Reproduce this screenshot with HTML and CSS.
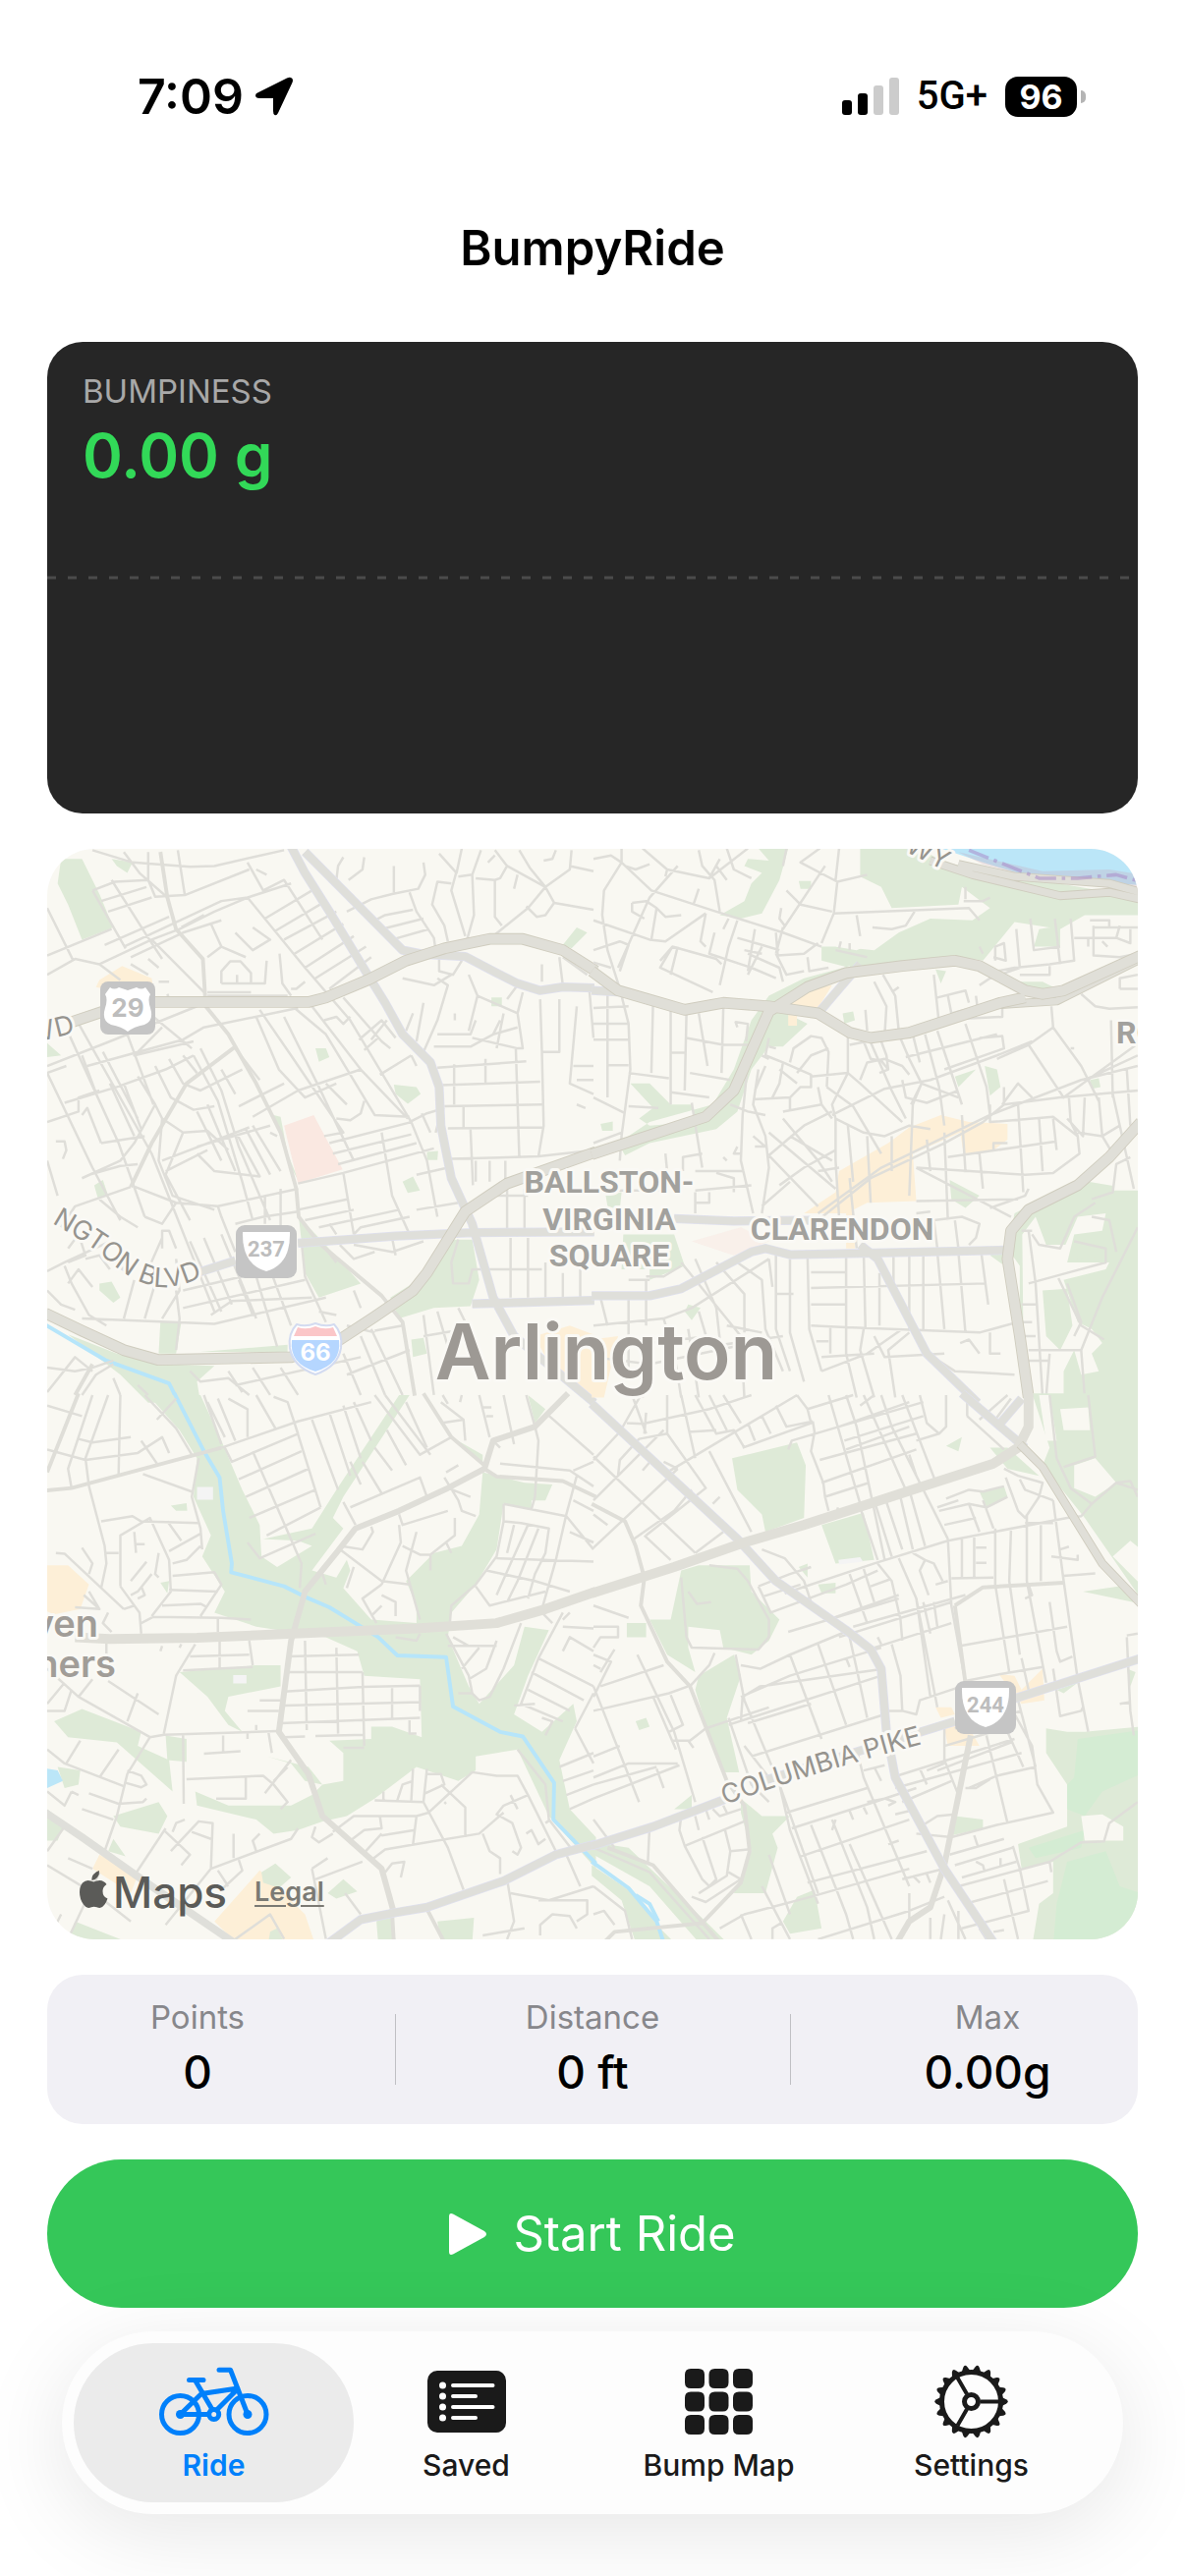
FILE: index.html
```html
<!DOCTYPE html>
<html lang="en">
<head>
<meta charset="utf-8">
<meta name="viewport" content="width=device-width, initial-scale=1">
<title>BumpyRide</title>
<link rel="stylesheet" href="styles.css">
</head>
<body>
<div class="app">
  <div class="status">
    <div class="status-left">
      <span class="clock">7:09</span>
      <svg class="locate" viewBox="0 0 38 40" aria-hidden="true"><path d="M36 1q3 1 1.500 5L23 37q-1.500 3-3.500 2-1.500-1-1.500-4V22H4q-4 0-4-3 0-2 3-3L32 1.500Q34.500.400 36 1z"/></svg>
    </div>
    <div class="status-right">
      <svg class="signal" viewBox="0 0 58 38" aria-hidden="true"><rect y="23" width="10" height="15" rx="3"/><rect x="16" y="16" width="10" height="22" rx="3"/><rect class="off" x="32" y="8" width="10" height="30" rx="3"/><rect class="off" x="48" width="10" height="38" rx="3"/></svg>
      <span class="network">5G+</span>
      <span class="battery">96</span>
    </div>
  </div>

  <header class="title-bar"><h1>BumpyRide</h1></header>

  <main class="content">
    <section class="graph">
      <h2 class="graph-label">BUMPINESS</h2>
      <p class="graph-value">0.00 g</p>
      <svg class="graph-line" aria-hidden="true"><line x1="0" y1="2" x2="100%" y2="2"/></svg>
    </section>

    <section class="map" aria-label="Map of Arlington">
      <svg class="map-art" viewBox="0 0 1110 1110">
        <!-- north-west -->
        <g transform="translate(0 -4) scale(.3546 .3571)">
          <path class="park" d="M40 40H100L150 140 190 235 100 270 60 170 30 110zM185 40 245 50 230 80 200 60zM1480 285 1520 235 1550 250 1505 295zM1275 435H1305V460H1275zM770 580H800L810 605 780 618zM995 683 1060 690 1072 710 1035 738 1000 710zM0 565 40 600 0 605zM650 770 670 775 690 880 725 965 690 900zM1090 875 1122 872 1120 898H1090zM1020 960 1050 945 1070 985 1035 992zM135 970 160 955 175 1000 145 1005zM150 1250 185 1245 210 1290 190 1305 150 1270zM722 1060 790 1130 900 1250 780 1290 740 1220zM985 1290 1080 1230 1150 1125H1220L1240 1240 1215 1315 1110 1320 1010 1350zM325 1360H385L370 1450H320zM60 1395 200 1450 330 1480 480 1485 430 1530 440 1590H290L210 1510zM1045 1410 1080 1405 1090 1450 1050 1460zM440 1445 690 1425V1445z"/>
          <path class="hospital" d="M680 800 765 770 848 925 720 965z"/>
          <path class="shops" d="M150 385 215 345 300 380 310 440 140 405zM1400 1400 1500 1370 1580 1400V1568H1530L1430 1460z"/>
          <path class="river" d="M-10 1365 170 1470 350 1535 370 1575"/>
          <path class="street" d="M130 15 245 50 410 62 480 60 590 35 680 15M290 20V100L310 148 395 143 580 70M375 15 395 143M220 20 265 80 345 150M130 130 195 105 290 100M130 130 225 295M185 100 290 265 330 325M155 160 285 120M175 190 300 150M0 180 75 330M0 315 185 240M0 370 80 325 150 340 300 270 380 240 480 190 575 150 700 110M165 285 350 205M220 290 500 160 575 150M240 320 390 250 500 215M150 340 210 385M300 270 450 420M385 235 450 200M470 225 500 290 460 320M500 290 570 320M575 150 740 350 870 500 1045 790M575 50 620 130 680 100 790 270M625 210 760 130M655 245 800 160M680 270 830 190M710 310 850 225M740 350 880 260M770 380 915 290M810 410 930 320M600 70 630 85M500 395V360L525 332H555L585 365V395H500M545 370V395M630 330 625 395H585M460 420H585M460 430H690M667 310 675 395 700 430M590 235 640 270 590 300 540 250M700 410H715L740 390M240 340 290 370M290 325 320 350M320 390H350M320 440H350L345 425M830 100 835 60 850 35M865 100 905 70 910 35M995 60V135M1080 50 1085 85 1065 125 990 140 930 155 860 190M940 215 970 200 1050 185M960 240 1080 210M990 270 1095 240M1040 135 1060 190 1110 265 1115 300M1125 25 1175 80 1190 10M1175 75 1160 130 1200 260M1160 110 1120 105 1105 170 1140 230 1150 275M1245 15 1220 85 1180 90M1220 85 1225 200 1205 270M1285 15 1320 60 1430 120 1380 180 1280 260M1230 95 1285 100V205L1305 230M1320 60 1300 95 1285 100M1355 15 1385 65 1430 120 1500 70 1505 15M1430 120 1455 165 1568 185M1375 175 1405 205 1430 200 1455 165M1265 50 1285 30M1340 125 1350 85M1500 60 1568 75M1425 45 1450 40 1460 15M0 630 180 560 430 460M0 650 55 630M85 500 300 880 420 1180 480 1330M50 735 200 690 340 640 420 600M65 545 205 850 280 1060M115 630 390 555 450 520 720 465M145 720 100 600M100 770 115 750 155 850M0 790 90 760 90 720 150 700M0 650 130 920 210 1070M180 680 250 830M220 680 270 810M260 660 310 740 250 850 210 900 100 950M310 630 355 720 420 755 480 745M350 610 390 680 440 700 560 640M390 600 430 650M160 590 260 780M230 540 305 740M305 490 415 580M330 520 250 600 420 560M420 600 490 730 560 960 590 1070M440 580 500 700 550 860 640 1070M540 580 610 670M500 640 540 710M550 745 680 680M590 775 720 700 900 640M600 490 665 640 740 720 830 680M610 470 700 600 850 820 795 830M680 490 780 690 880 900M710 465 800 540 940 770 1040 775M760 460 900 640 1035 780M800 680 860 740M830 780 870 785 900 765 910 730M795 500 830 490 850 510 870 490M850 435 960 560 985 580M895 555 960 500 1000 550M910 585 950 550M930 555 975 500M955 655 1045 600M1045 600 1060 630M1060 560 1080 450M1030 530 1050 480M155 850 280 830M45 895 55 870 50 845 25 845M310 740 330 780 390 820 460 815 520 870M330 900 580 805M390 820 340 940 410 1070M430 760 500 900M460 740 540 930M330 780 320 900 360 1000 480 1040M430 860 640 800M570 810 640 940M590 800 670 930M545 825 610 945 480 930 430 880M640 820 660 830M240 975 80 1030 40 1090M120 940 210 915 260 910M240 970 370 1020 490 1030 720 980M340 930 460 870M0 900 30 1000M150 1010 210 1060 260 1090M370 1020 330 1080 280 1060M490 1030 500 1060 540 1160M540 1080 620 1060 720 1045M625 1000V1080M670 980V1090M720 1040 860 1010M740 1070 880 1040M810 850 1045 790M820 880 1045 825M835 910 1060 850M720 965 850 935 1110 865M850 935 880 1110M960 820 990 1000 1040 1110M1045 790 1090 900 1120 1060M1075 765 1100 820M1040 790 1090 765 1140 750M780 1090 1010 1040M810 1080 830 1110M880 1110 900 1090 1040 1060M1060 1040 1180 1020M1060 940 1150 920M1115 820 1130 760M1120 540H1215L1230 500M1110 575H1215L1280 540 1350 520M1120 635 1375 617M1130 685 1415 675M1140 745 1420 740M1150 808 1422 805M1160 895 1410 888 1568 870M1168 625V740M1195 745V810M1215 810 1222 970M1258 610V680M1345 580 1355 890M1415 440 1420 590 1425 800 1410 888M1470 440V590H1420M1520 460 1500 680 1568 710M1568 550 1555 400M1235 430 1350 480 1365 580 1350 580 1220 550M1210 370 1235 430 1210 530M1125 300V360L1165 370 1190 330M1120 380 1150 400 1120 500 1080 590M1020 380 1110 400 1160 370M1365 420 1350 480M1350 400 1320 440M1420 390V340M1470 320 1480 400M1480 320 1550 370M1170 480V500M1290 580 1310 480M1280 540 1300 500M1510 630H1568M1520 670H1568M1520 740 1545 750M1230 900V960M1270 900V960M1315 900V970M1280 1000H1380M1320 980V1100M1370 980V1100M1180 1125 1160 1190 1165 1250H1210L1220 1210H1420M1330 1120V1290M1380 1120V1290M1430 1190V1290M1480 1220V1290M1530 1200V1290M60 1190 110 1170 90 1110 60 1150M0 1215 50 1190 180 1130M110 1180 150 1170 180 1210M330 1150V1100L350 1100 370 1150M290 1210 330 1120M50 1200 70 1250 120 1340 170 1370M60 1250 90 1210 130 1260M0 1270 40 1310 80 1325M250 1240 220 1350M310 1250 280 1350M370 1180 380 1270 330 1350M410 1130 500 1330M450 1120 530 1310M500 1110 600 1350M550 1240 590 1340M600 1230 660 1430M640 1210 700 1370M390 1270 560 1230M390 1320 740 1240M470 1340 530 1300 760 1290M100 1350 360 1360 480 1365 800 1290M370 1270 380 1350 370 1440M730 1130 740 1230 800 1360M790 1140 830 1190M840 1140 880 1180 940 1160M880 1140 990 1160 1080 1130M990 1120 1000 1170M880 1270 900 1320M830 1340 780 1330M860 1370 940 1390M0 1490 80 1500 130 1490 190 1470M0 1560 80 1460 130 1500M100 1568 140 1510 190 1480M190 1520 210 1568M410 1500 440 1530 520 1520 580 1568M260 1540 290 1568M520 1500 560 1560M590 1490 640 1568M670 1490 720 1568M540 1540 900 1460M850 1450 900 1568M900 1400 970 1568M930 1380 1020 1568M940 1385 1020 1370M860 1510 1040 1440M1080 1340 1110 1568M1120 1330 1150 1430M1080 1400 1200 1380M1180 1320 1220 1400"/>
          <path class="road" d="M325 20 345 150 370 240 447 325 455 460 520 540 600 680 670 820 715 980 722 1060 780 1135 960 1285 1020 1360 1055 1570M540 575 400 680 300 850 240 975M130 1480 80 1568"/>
          <path class="avenue halo" d="M700 5 740 80 810 190 920 370 970 450 1020 540 1100 620 1125 690 1130 800 1160 950 1220 1080 1280 1290 1340 1400 1570 1590M740 20 830 110 960 240 1020 300 1080 312 1200 318 1290 365 1350 395 1415 415 1480 405 1570 408M720 1135 1000 1115 1220 1105 1570 1103M1220 1308 1570 1298M430 1220 540 1185M200 1190 235 1210"/>
          <path class="avenue" d="M700 5 740 80 810 190 920 370 970 450 1020 540 1100 620 1125 690 1130 800 1160 950 1220 1080 1280 1290 1340 1400 1570 1590M740 20 830 110 960 240 1020 300 1080 312 1200 318 1290 365 1350 395 1415 415 1480 405 1570 408M720 1135 1000 1115 1220 1105 1570 1103M1220 1308 1570 1298M430 1220 540 1185M200 1190 235 1210"/>
          <path class="highway casing" d="M70 505 160 475M300 448H750L800 435 920 385 1030 330 1140 295 1270 268H1365L1480 300 1575 360M-5 1335 100 1385 220 1440 320 1468 700 1460 840 1410 940 1345 1050 1270 1090 1220 1200 1045 1320 965 1575 875"/>
          <path class="highway" d="M70 505 160 475M300 448H750L800 435 920 385 1030 330 1140 295 1270 268H1365L1480 300 1575 360M-5 1335 100 1385 220 1440 320 1468 700 1460 840 1410 940 1345 1050 1270 1090 1220 1200 1045 1320 965 1575 875"/>
        </g>
        <!-- north-east -->
        <g transform="translate(556 -4) scale(.3571)">
          <path class="park" d="M470 10H555L530 100 480 195 420 210 360 200 430 160 450 110 480 80 430 60 440 40 500 45zM585 103H620V125H590zM760 10H930L1000 50 1150 80 1560 150V200H1400L1330 240 1200 220 1110 330 1050 320 900 330 730 350 650 330V290L700 290 800 300 870 250 960 210 1080 215 1130 180 1050 120 1040 170 850 180 820 120 760 90zM1270 240 1330 230V290H1255zM730 345 600 380 500 430 450 500 400 640 340 740 160 790 70 850 90 885 160 850 350 810 410 760 450 640 500 575 540 575 610 510 550 480 620 400 740 370zM105 680H160L220 740H280L290 790 160 800 130 780 170 750zM1180 390H1280L1340 420 1230 420zM1030 660 1090 640 1040 690zM1115 630 1150 640 1160 690 1130 715zM710 480 740 475 745 500 715 510zM975 355 1005 360 990 395zM20 795 55 788V815H25zM1415 670 1440 665 1445 690 1420 695zM1200 1050 1300 1000 1410 960 1560 985V1575H1240L1215 1400V1200L1180 1150zM1015 955 1100 1000 1060 1035 1020 1010zM85 1110H230L260 1200 160 1240V1210H80zM270 1310 305 1320 280 1355 260 1330zM1130 1170 1165 1150V1195zM35 1000 80 990 75 1040 40 1030z"/>
          <path class="land" d="M1222 1110 1260 1060 1290 1140 1345 1140 1380 1060 1460 1050 1450 1100 1370 1110 1350 1190 1470 1190 1460 1210 1340 1240 1380 1360 1420 1380 1450 1420 1420 1450 1440 1500 1390 1510 1370 1440 1340 1500V1575H1245L1225 1400zM1510 900 1560 900V985H1480zM860 180 1070 180 950 205 860 250 750 300 690 290z"/>
          <path class="park" d="M1280 1270 1350 1265 1365 1370 1330 1440 1290 1400zM1370 1130 1430 1120 1430 1175 1380 1180z"/>
          <path class="water" d="M990 10H1560V115L1260 95 1110 50z"/>
          <path class="haze" d="M1040 20 1280 75 1470 70 1560 85V135L1260 95 1110 55z"/>
          <path class="shops" d="M700 930 840 850 900 805 990 770 1070 790 1180 795V840L1140 870 1055 880 1045 820 910 880 920 1015 780 1020 740 1040 745 1150H720V1050H600L690 990zM550 465 610 410 680 400 640 465zM555 485H580V515H555zM-5 1410 70 1400 30 1575H-5z"/>
          <path class="hospital faint" d="M280 1130 420 1090 500 1130 400 1170z"/>
          <path class="street" d="M0 40 50 30 80 50 30 130 25 200 40 300 75 410M80 10V50L165 130 350 190 540 250 650 290M140 10 210 70 330 95 440 10M90 60 120 70 160 55M240 60 160 150 70 350M205 90 210 70M300 15 310 60 345 100 360 190M380 10 400 70 450 95M350 60 380 100M360 40 330 95M0 215 160 270 205 275 320 195M110 165 150 160 180 180 165 270M110 165 110 190 145 210M180 180 205 205 250 200M300 125 285 170M320 195 305 275 320 290M0 300 75 275 100 285 75 360M0 335 50 350M190 330 225 290 350 325 365 340M225 290 190 350 340 420M240 290 220 370M345 250 330 310 450 350 520 380M410 215 385 290 360 400M385 210 370 240M410 265 480 285 530 300M460 240 440 360M440 310 530 350 540 390M430 300 480 310M480 290 440 370M645 10 590 50 695 105 685 195 650 280M695 105 780 85M700 10 690 100M660 60 540 240M685 195 1070 180 1100 215M915 190 890 230 850 240 795 235M750 200 760 260M550 130 590 170 680 190M535 180 530 210 545 230M520 310 550 370 600 360M520 250 525 315 600 310 640 280M610 320 615 360 670 350M700 295 705 275M730 280V300M550 10 540 60M540 235 520 310M690 300 780 320M1055 160 1110 160 1130 150M1060 120 1060 155M1100 290 1110 310M1145 330V290L1170 280 1175 330 1140 320M1205 240 1215 350M1245 210 1255 300 1330 290M1315 210 1330 340M1360 210 1370 330 1300 340 1200 350 1150 360M1370 265H1490M1425 230V315L1500 320 1551 310M1425 235H1551M1415 215H1470V235M1500 230 1490 265 1530 280 1530 240M1450 275 1465 290M1410 265V290M1215 370H1300V345M1390 425 1430 460 1470 467 1551 463M1500 410 1500 380 1551 370M1500 410H1551M0 465 100 460M0 510H100M0 555H100M40 410V720M75 410 100 510 105 640 80 830 75 900M40 628H100M170 440 165 650M220 460V740M265 480 260 700M265 550 370 570 450 570M220 592H265M300 480 325 630M370 465 365 650M100 650 215 665M275 650 390 670M220 705 330 720M100 745 185 750M0 720 90 765M0 850 80 820M280 735 310 920M410 520 405 505 440 510 435 560M390 740 440 760 490 770M440 620 425 770 420 900 455 1050M470 640 455 740 490 830 500 920 480 1050M490 630 460 700M500 550 490 600 540 620 530 680 510 720M480 600 500 610M500 575 520 580M560 620 570 580 620 545 650 550 670 590 665 690M540 620 620 655 620 690 590 690 560 720 560 760M580 650 620 600 670 580M620 660 725 650 760 680 880 790M530 640 580 680M455 725 560 720M540 760 650 740 680 780M640 690 650 740M665 690 740 745 820 880M725 530 725 650 680 740 690 780M680 770 830 695 960 670 1150 600 1250 560M690 780 690 900 700 1060M725 800 740 960M690 780 770 820 830 830 900 800 960 810M780 540 850 700 890 780M730 570 780 560M770 560 790 610 820 615 840 640M760 670 780 620 830 610 880 630 900 655M815 650 840 640 835 600 820 560M870 540 900 610 935 680 1040 720M910 540 930 620M945 540 985 690 1000 800M980 530 1050 740M1060 510 1120 690 1130 770M890 605 1150 540M880 670 890 720 950 735 1040 700M935 680 910 740 900 1000M935 680 905 740M1000 640 1170 580 1165 545 1100 550M775 470 780 530M800 390 835 460 830 540M825 370 860 430 870 530M850 420 870 405M970 370 985 510M980 435 1060 415 1070 450M1010 430 1020 480 1060 470M1090 430 1095 470M1060 495 1165 490V450M1100 400 1130 380 1215 350M1305 460 1310 520 1240 570 1150 610M1310 520 1390 630 1440 730M1165 740 1210 680 1250 720M1240 570 1340 720 1560 560M1170 690 1170 740 1330 720 1551 700M1370 580 1360 580M1475 500 1480 720M1551 630 1390 670 1130 770 820 920 640 1050M1170 740 1110 790 1000 850 790 950 640 1070M1130 740V790L1310 775 1380 830M1210 740 1225 990M1270 780 1280 930M1310 780 1320 870M1355 720 1360 790 1380 830 1385 880 1310 935 1230 940 920 920M1400 720 1395 830 1350 780M1440 720 1450 830M1480 710 1500 800M1520 640 1530 800M1551 600 1400 670M1380 820 1450 830 1500 800M1450 830 1480 880M1010 890 1320 845M1000 820 1010 1070M1050 770 1060 930 1055 930M1100 880 1110 980M1140 870 1140 850H1180M920 920 1190 1060M950 840 960 930M850 830 850 930M780 830 790 1020M730 950 750 1150M640 930 700 920M500 820 690 980M540 780 640 900 680 960M560 830 680 900M500 885 600 800 680 760M500 885 640 1030M530 970 600 920 690 870M480 1030 560 960M455 830 490 860H460M0 985 200 985M290 930H430M255 930V890L310 880M205 880 210 930M350 935 400 950 400 990M290 985 450 970M290 990V1050M330 990V1020H290M370 890 380 900M410 860 400 880H420M920 1015 1210 1010M1130 1035 1230 1000 1240 980M920 1050 960 1045M970 1070 1050 1060 1100 1080 1090 1120 1070 1140M970 1070 980 1150M1030 1070 1040 1150M560 1180V1390L600 1530M520 1170V1380L560 1500M610 1170 615 1380 650 1500M720 1170V1380M770 1160 775 1380M815 1220V1370M855 1170V1250M900 1170V1380M940 1160V1380M980 1160 1000 1380M1040 1160 1060 1390M1105 1160 1125 1310M620 1218H720M620 1263 1120 1250M620 1310H720M520 1280H570M620 1370 720 1375 1100 1390 1210 1360M675 1375V1450M635 1415H670M650 1460 800 1450M720 1375V1450L750 1575M770 1380 760 1440 800 1575M880 1380 780 1450 650 1500M900 1390 840 1440 860 1575M800 1400 830 1460 1000 1450M1130 1390V1450H1160M1045 1420 1070 1410 1100 1450M960 1455 1030 1500 1200 1510M250 1190 420 1400 430 1575M290 1180 350 1320 370 1500M350 1190 430 1280V1390M410 1190 480 1240 490 1380 540 1500M500 1180 510 1260M250 1200 200 1230H150M100 1240H160M0 1370 200 1350 280 1320 500 1180M100 1290V1500M150 1240V1370M20 1290 40 1370M70 1430 330 1400M300 1330 330 1430 540 1400M380 1370 480 1390M0 1460 160 1480 400 1430M200 1350 230 1450 250 1575M270 1380 300 1575M140 1480V1575M1220 1360H1250M1220 1310H1260M1210 1400H1260M1240 1440 1390 1440M1250 1110 1270 1140 1330 1150 1370 1060 1430 1020M1240 1250 1350 1220 1460 1190 1460 1150 1370 1130M1325 1235 1390 1370 1455 1410M1350 1250 1390 1360 1370 1400M1551 1090 1450 1290 1390 1440 1400 1575M1420 1060 1470 1070 1490 1160M1240 1100 1260 1250 1280 1575M1220 1100H1250M1500 800 1540 980M1420 1010 1480 990 1490 910 1530 890M1240 1470H1300M1300 1450 1290 1575"/>
          <path class="avenue halo" d="M-5 1285H160L250 1265 450 1160 490 1150 560 1168 800 1163 1170 1155M230 1065 400 1072 620 1070M760 1140 810 1180 950 1450 1095 1590M-5 415 80 420M760 340 640 480"/>
          <path class="avenue" d="M-5 1285H160L250 1265 450 1160 490 1150 560 1168 800 1163 1170 1155M230 1065 400 1072 620 1070M760 1140 810 1180 950 1450 1095 1590M-5 415 80 420M760 340 640 480"/>
          <path class="highway casing thin" d="M960 45 1080 85 1330 145 1470 135 1560 155M1040 55 1200 90 1470 110 1560 135M1160 455 1320 445 1560 325"/>
          <path class="highway thin" d="M960 45 1080 85 1330 145 1470 135 1560 155M1040 55 1200 90 1470 110 1560 135M1160 455 1320 445 1560 325"/>
          <path class="highway casing" d="M-5 360 70 415 260 470 370 450 500 460 640 480 730 535 790 550 900 535 1160 450 1230 435M-5 882 320 775 400 700 500 475 610 405 720 365 880 345 1030 330 1100 345 1230 415 1280 425 1340 415 1560 315M1560 790 1470 890 1380 970 1240 1040 1190 1100 1180 1180 1215 1400 1240 1575"/>
          <path class="highway" d="M-5 360 70 415 260 470 370 450 500 460 640 480 730 535 790 550 900 535 1160 450 1230 435M-5 882 320 775 400 700 500 475 610 405 720 365 880 345 1030 330 1100 345 1230 415 1280 425 1340 415 1560 315M1560 790 1470 890 1380 970 1240 1040 1190 1100 1180 1180 1215 1400 1240 1575"/>
          <path class="border" d="M1070 15 1270 95 1380 95 1490 85 1560 105"/>
        </g>
        <!-- south-west -->
        <g transform="translate(0 556) scale(.3546 .3571)">
          <path class="park" d="M290 0H440L500 130 560 270 610 370 615 460 660 490 760 430 720 415 620 410 760 380 830 270 1010 0H1040L850 290 820 350 850 380 760 500 830 520 860 470 870 500 850 550 930 640 1060 650V600L1030 530 1110 450 1190 430 1240 340 1250 220 1370 250 1450 255 1430 300H1390V325L1310 310 1290 440 1230 540 1160 620 1150 690 1210 830 1240 880 1340 770 1370 660 1440 670 1380 800 1340 910 1420 960 1510 880 1520 930 1470 1040 1500 1180 1575 1260V1350L1440 1200 1350 1010 1230 1030V1070L1180 1100 1060 1060 940 1150 860 1200 790 1215 720 1240 650 1250 600 1210 430 1170 425 1130 520 1170 700 1170 760 1140 790 1110 850 1100V1020L810 985 930 980V945H990L1075 975 1070 810 910 800 890 730 800 690 600 660 480 620 510 560 445 460 470 400 420 290 430 180 380 100zM380 790 600 770H670V830L520 860 510 900 560 960 520 940 460 860zM20 930 100 895 270 960 260 1000 350 1040 360 1130 280 1060 200 990 60 975zM340 970 400 980V1045L345 1040zM190 1200 320 1160 345 1200 320 1250 210 1230zM0 1180 50 1220 30 1270H0zM30 1060 95 1070 90 1110 50 1120zM175 1300 190 1265 225 1315zM805 1420 850 1380 890 1415 830 1435zM945 1500 990 1460 1000 1560H950zM1120 1500 1225 1490 1220 1560H1130zM80 1500 220 1555 60 1560zM325 535 350 530 345 565zM355 315 400 308 402 330 370 330zM630 1030 750 1060 790 1110 740 1100 700 1050zM1160 120 1250 170 1250 200zM1380 0 1430 40 1400 80z"/>
          <path class="shops" d="M-5 485H60L120 540 95 610 20 625-5 615zM150 1310 260 1370 240 1420 130 1350zM480 1500 610 1355 740 1480 770 1568H550z"/>
          <path class="park" d="M615 1360 655 1335 700 1375 665 1405 620 1390zM640 1530 660 1520 680 1560H635z"/>
          <path class="plot" d="M430 262H476V298H430zM534 798H572V822H534z"/>
          <path class="water" d="M0 1065 30 1070 45 1100 0 1120z"/>
          <path class="river" d="M365-5 450 160 495 235 505 330 530 480 528 505 680 545 740 575 810 605 950 690 1005 742 1145 747 1165 888 1300 960 1365 973 1455 1105 1453 1210 1575 1335"/>
          <path class="street" d="M280 0 370 95 415 170M130 0 60 210 70 265M175 0 110 180 120 260M210 0 205 225M0 155 110 185 260 165 330 120 350 165M0 30 100 60M90 125 130 135 240 120M270 130 315 195M315 70 370 10M275 225 415 275M435 180 415 290 440 380 445 440M120 260 165 430 170 480 155 550M155 360 245 345 270 360 435 365M210 545V400L295 350 350 470 355 560 300 630M345 360 385 415M350 445 440 395M360 480 400 470 440 430M360 515 480 505 500 540 440 630M350 555 490 560M330 600 440 595 460 605M170 450H205M250 390 255 450M255 425H280M320 450 310 510 320 520M285 475 240 530M210 545 265 620 270 680M270 545 280 570 260 580M300 510 260 560 240 570M25 450 50 452 220 610M100 435 130 480 120 510M220 610 250 600M120 560 150 610 80 605M105 570 145 605M175 620 160 650 185 675M270 650 305 632 500 635 585 640M490 635V675M450 0 500 140M460 20 510 120M490 10 540 130M520 10 575 40V120M600 0 655 95M650 5 690 20 720 110M500 150 720 75 930 20M510 150 530 190 720 110M550 240 730 160M570 290 750 210M580 350 770 270M630 400 785 320M590 160 730 480 725 550M710 80 785 320M760 70 835 270M810 50 870 230M850 30 900 180M880 20 930 130M575 420 610 465 770 395M940 0 1070 170 1160 120M970 0 1100 170M1030 20 1090 150M940 150 990 215M975 100 1030 200M870 190 900 255M905 190 960 280M870 320 1070 235 1090 290M850 305 885 370M1140 235 1180 300 1190 330 1230 345M1150 265 1215 290M1145 220 1180 200M1130 20 1195 70 1200 130M1130 80 1195 70M1135 0 1150 25M1190 0 1185 20M1240 0 1270 120M1250 35H1275M1260 60H1280M1310 0 1340 140M1375 0 1400 90 1410 130 1400 290 1390 325M1280 130 1300 150M1300 195 1500 215 1568 260M1520 230 1490 340 1460 470 1420 610M1310 310 1490 345 1568 440M1310 310V360L1360 365 1440 380 1430 450 1400 510 1380 580M1310 360 1290 460 1230 540 1160 600 1155 660M1340 370 1320 450M1380 370 1330 480 1290 570M1410 380 1350 530 1320 590M1290 465 1568 475M1260 500 1400 530 1500 560M1230 545 1270 600 1430 560M1510 215 1568 190M1430 50 1568 170M1510 300 1568 330M1500 390 1568 420M840 440 960 530 1040 540M1010 370 1015 420 960 540M930 375 935 390 905 440 840 430M1020 430 1070 455 1100 455 1170 400 1170 350M1010 340 1020 370 1150 330M1060 390 1030 500 1070 640M1100 455V500M1145 420 1160 450M880 490 860 550M960 540 905 580 945 650M960 570 1000 590V630M930 630 960 600M790 510 800 540M1000 690 1060 700 1070 680M1145 680 1210 800 1220 850M1150 715 1290 715M1165 690 1210 715M1240 720 1190 780M1290 700 1260 780 1210 810M1360 650 1310 780 1270 860 1240 870 1220 850H1180M1480 620 1410 750 1360 880 1480 930M1340 885 1400 880M1500 620 1480 640M1410 750 1568 830M1390 790 1540 870M1380 840 1500 900M1480 730 1500 690 1568 730M1480 660 1568 665M1420 620 1450 650M410 745 580 740M390 785 590 775M495 700V780M580 700 590 770M425 710 370 800 335 965M170 700V740M330 715 325 730M385 710 380 720M690 745 895 740M690 790 905 790M680 845 905 832 1070 828M680 885 1070 875M670 935 1070 920M740 700 745 955M830 720 835 965M905 790 910 1000M990 835V920M1070 828V900M610 870H670M575 900H665M680 975 740 973M770 972 910 968M850 1005H910M1040 920V965H1060M295 975 335 968 660 958M600 940V955M575 960V980M505 970V1015M450 1022 555 1015M390 970 392 1165M635 960 645 1020M400 1095 620 1085 650 1110 690 1160 670 1180M485 1150H570V1085M700 1040 625 1135M295 975 230 1080 200 1200 165 1300M175 815 320 910M90 860 295 975M260 850 230 930M130 810 90 860 0 780M70 840 50 900 0 900M50 820 0 880M0 1010 50 1050 220 1115M95 985 55 1050M205 1010 150 1090M230 1070 270 1085 285 1110 270 1118 225 1105M120 1135 205 1165 275 1160 285 1150M100 1180 190 1210M0 1130 50 1170 70 1130M90 1140 70 1130M50 1230 0 1300M0 1340 150 1430 240 1500M60 1320 130 1350M40 1480 20 1520M150 1360 60 1550M340 1235 250 1370M335 1240 410 1310 385 1340M395 1210 370 1220 360 1245M355 1300 435 1215 475 1220 470 1350 340 1510M415 1245 470 1265M535 1250V1320M610 1250 590 1270 600 1300M470 1350 700 1265 720 1235M490 1355 520 1400M550 1325 560 1355 500 1410M770 1230 760 1260 780 1275 820 1250M760 1350 805 1320M760 1350 770 1400 800 1550M770 1380 905 1330M855 1420 900 1480M820 1245 880 1200 1060 1200 1095 1190 1220 1075 1290 1085H1350L1380 1140 1460 1300M870 1270 910 1240 960 1235 955 1200M960 1255 1055 1240M905 1310 960 1250M930 1325 970 1295 1060 1280 1240 1250 1310 1190M1060 1200 1050 1280M940 1155 1080 1160M1080 1160 1150 1290 1195 1410M965 1130V1155M1005 1155 1020 1110 1050 1100M1050 1065 1045 1155M1090 1065 1080 1160M1090 1080H1130L1140 1110 1085 1135M1130 1110 1200 1175V1260M1095 1190 1160 1130M1140 1160 1145 1165M1380 1140 1310 1170 1290 1195 1335 1220 1360 1290 1350 1310 1335 1300M1330 1140 1350 1180M1250 1250 1270 1300 1300 1320V1365M1375 1250 1390 1240 1410 1280 1430 1265M1430 1220 1445 1210M1350 1010 1430 1110 1440 1210 1510 1300M970 1360 990 1335 1025 1330 1015 1375M1320 1380 1340 1500 1320 1551M1490 1310 1530 1400M1330 1420 1440 1440 1568 1400M1410 1440H1550V1480L1520 1500M1250 1540 1370 1520M1415 1540V1510L1450 1480 1500 1485 1520 1520M540 1551 640 1480 680 1550M650 1100 690 1060M1430 970 1450 930 1420 920M1470 1060 1568 1020M1480 1100 1568 1070M1490 1140 1568 1110M1500 1180 1568 1150M1515 950 1568 850M1515 950 1568 1050"/>
          <path class="road" d="M90-5 0 220M-5 272 70 265 500 150M1255 210 1290 232 1480 245 1575 290M1080-5 1160 120 1255 200M1090 1465 1140 1560M990 1475 995 1560"/>
          <path class="road wide" d="M1495-5 1400 90 1280 130 1255 210 1150 265 1010 330 885 380 830 450 740 560 700 700 665 960 750 1080 790 1200 960 1350 995 1475"/>
          <path class="avenue halo" d="M790 1575 900 1495 1000 1475 1090 1460 1310 1385 1460 1310 1575 1280"/>
          <path class="avenue" d="M790 1575 900 1495 1000 1475 1090 1460 1310 1385 1460 1310 1575 1280M-5 1190 100 1260 300 1400 550 1570"/>
          <path class="highway" d="M80 690 180 695 430 692 705 680 1060 665 1290 650 1430 610 1575 560"/>
        </g>
        <!-- south-east -->
        <g transform="translate(556 556) scale(.3571)">
          <path class="park" d="M395 180 580 135 605 200 600 350 490 390 480 340 410 270zM650 370 770 335 800 470 690 480zM250 500 300 485H445L450 560 530 640 500 700 450 740 370 720 360 670 270 660V720L290 790 210 740 160 640 220 640zM300 800 400 740 420 800 380 920 415 1075H370L320 940 290 840zM95 650H150V690H95zM120 930 150 920 160 945 130 955zM1100 275 1170 260 1180 290 1120 320zM1005 145 1050 120 1040 160zM585 490 610 480V520zM640 540 690 535V565H650zM230 1180 280 1140V1180zM420 1150 480 1200H560L510 1250 525 1290 490 1420H400L450 1300 420 1190zM0 1275 100 1290 330 1510 380 1560H300L160 1400 0 1310zM-5 1340 100 1410 190 1520 230 1560H120L80 1440-5 1370zM540 1500 580 1430 630 1410 650 1520 560 1535zM1030 1200 1110 1210V1235L1020 1255zM1250-5H1560V580L1400 350 1280 200 1300 150zM1395 560 1500 545 1560 595zM1130 150 1180 150 1270 230 1180 210zM1290 950 1350 960H1400L1560 945V1570H1250L1270 1450 1310 1420V1330L1220 1350 1210 1280 1350 1230V1110L1290 1020zM1320 840 1380 820 1340 850zM1520 780 1545 790 1530 830z"/>
          <path class="golf" d="M1380 980 1560 955V1080L1450 1130 1400 1200 1350 1180V1110L1370 1090zM1240 1290 1400 1240 1390 1290 1260 1320zM1350 1330 1460 1300 1500 1400 1560 1420V1570H1310L1320 1450z"/>
          <path class="land" d="M1330 40 1410 35 1415 100H1340zM1370 200 1430 180 1490 250 1430 290 1370 265zM1480 460 1530 415 1560 440V540zM1390 1200 1450 1195 1510 1230V1270H1400zM1270 0H1300L1320 130H1290z"/>
          <path class="plot" d="M698 470 760 462 768 475 700 483z"/>
          <path class="shops" d="M1155 795 1200 800 1220 840 1280 780 1285 870 1220 880zM975 890H1020L1030 910 990 920zM1000 950 1060 930 1100 1000 1010 1000z"/>
          <path class="river" d="M-5 1330 100 1405 180 1500 200 1560"/>
          <path class="river" d="M120 1425 160 1450 185 1500"/>
          <path class="street" d="M0 185 75 105 135 0M95 80 140 82 330 40 450 0M0 175 290 450M70 230 75 185 130 125 210 110 210 0M150 50 145 110M250 0 290 180M290 0 350 110 400 100 430 150M330 0 380 100M370 0 420 80M210 110 320 265 150 400M110 0 150 110M270 105 350 100M210 220 580 0M140 215 170 180M0 300 200 100M0 435 240 210M145 400 220 470M115 410 230 330 280 270M200 190 240 210M290 450 370 390M340 310 360 290M330 160 450 390M425 150 620 80 610 40 580 0M440 80 460 130M480 60 505 110M520 30 550 90 625 75M625 75 630 105 620 160 655 250 660 290 670 330M555 155 565 130 700 90 940 20M610 40 740 0M670 0 760 310M720 0 750 90 830 470M770 0 850 180 890 270M820 0 850 90 930 250 1010 410M880 0 930 130 980 260M930 0 950 80 985 110 1005 90V0M760 30 800 0M700 90 900 20M715 130 940 60M720 155 900 90M645 185 920 110M650 250 920 155M660 290 785 250M920 130 985 110M900 170 920 230M695 320 700 335M800 300 850 460M830 290 880 440M870 270 910 440M900 270 945 430M800 480 1010 415 1350 350M545 565 800 480M760 320 810 470M470 545 560 510 620 490M480 575 590 540M470 545 505 620 720 540 810 500M480 440 545 465 600 530 620 590M555 675 870 580M730 510 780 650M770 495 800 590M790 545 845 525M810 480 850 530 875 640 880 700M870 465 920 580 980 890M910 450 945 470 930 500 955 570M945 470 970 480 995 530M975 540 1010 530M740 660 1060 570M670 640 870 570M700 690 1020 590M800 720 1020 650M940 590 960 680M970 590 980 660M1010 410 1020 600 1060 820M1050 410V520M1085 400V520M1145 380V540L1185 790M1190 380 1185 530 1215 740M1235 340V530L1290 820M1275 370V530M1310 300 1340 530 1380 810M1020 522 1140 520M1090 435H1120M1090 478H1120M1330 440 1355 432M1305 460 1380 470V455M1340 515 1430 508M985 330 1070 310 1100 390M980 320 1040 300M1005 295 1070 270 1110 275 1170 260M1070 310 1120 320 1180 290M1000 370 1090 350M1110 300 1140 380M1175 235 1210 330 1230 350 1270 290 1280 250 1210 230 1170 210M1215 240 1230 270 1310 300M1230 365H1310M1065 60V10M1065 60 1170 155M1100 70 1180 0M1145 70 1190 10M1300 0 1320 180 1360 265 1420 310 1490 250 1530 245 1551 290M1340 205 1430 175 1410 0M1420 310 1390 345 1350 350M1045 715 1350 660M1240 540 1250 570 1230 580M1300 590 1320 730 1330 760 1365 745M1220 750 1240 840M1060 815 1160 795 1280 775M1380 810 1410 960M1520 690 1530 900 1540 970M1520 685 1551 680M1500 880 1530 875M1310 780 1330 915 1390 900 1395 890M420 860 560 800 820 720M420 930 425 860 475 830 830 780M440 935 620 880M385 940 820 800M450 1030 830 910M420 770 475 780 560 740 730 670M560 740 650 980M640 710 720 940M730 690 750 780 780 920M720 750 730 775M810 690 820 710M850 710 875 800 880 900M840 900 880 900 920 910 930 870 1050 830M920 580 960 860M405 740 430 870 530 1110 640 1420M20 830 200 770M0 830 130 1160M0 900 215 850 270 830M125 740 230 960 290 1160M170 860 235 1010M220 855 255 940 215 960M0 1030 75 1000M0 1090 100 1050 240 1050M0 1110 180 1060M0 1150 245 1055M180 1065 200 1120M0 1210 60 1290M160 1230 155 1330M225 985H275L320 950 500 890M270 985 285 1005M275 830 330 770 345 735M270 560 295 595 335 590M250 520 265 690 280 720 470 725 500 690V640L440 530 410 495 330 485M0 600 100 635M0 660H70V690H20L0 720M0 740 50 760 0 860M60 725 20 790M0 770 20 780M0 340 40 370M385 920 450 1110 500 1160M430 1000 500 1090M530 1110 560 1240 640 1450M550 1190 780 1120M565 1235 800 1160 920 1120M590 1315 900 1210M610 1390 950 1300M360 1520 430 1480 620 1430 900 1350M620 1225 720 1480 740 1551M680 1210 780 1460 800 1551M730 1280 850 1551M690 1210 680 1240M730 1185 740 1210M770 1175 780 1195M750 1010 770 1090 900 1400M780 1160 830 1150 860 1160 840 1170M770 1070 830 1055M800 1060 820 1100M860 1195 900 1185M850 1090 1200 980M860 1120 1220 1020M880 1160 1020 1100M1000 950V1040L1040 1140M1000 1050 950 1070M930 1065 950 1110M1070 1120 1150 1085 1260 1060M1060 1120H1090L1130 1095M1120 970 1180 1220M1180 960 1225 1060M1195 900 1250 1000 1265 1110 1310 1190 1150 1225 1020 1260 920 1250M1000 1000 1170 950M980 1070 1190 990M1030 950 1220 900M1210 870 1260 1060M940 1225 980 1200 1030 1195M1015 1310 1170 1265M1030 1340 1195 1290M1050 1375 1205 1330M1040 1400 1300 1330 1390 1275 1455 1272 1470 1220 1551 1160M1195 1285 1215 1350 1240 1470 1050 1520M1085 1255 1095 1285M1090 1330 1110 1340 1115 1360M1160 1320V1345M1170 1380 1210 1551M1060 1450 1295 1385M1300 1330 1305 1360M840 1280 870 1270M880 1380 1000 1350M910 1370 930 1390M950 1365 960 1390M900 1420 900 1500M420 1480 450 1551M480 1400 560 1551M500 1310 560 1480M510 1551V1520L535 1505M640 1551 900 1470 1000 1430M960 1490V1551M1000 1480 990 1551M1040 1470V1551M1010 1440 1060 1551M1100 1520 1120 1551M1140 1530 1170 1525M0 1480 30 1470 60 1510M0 1400 90 1470 110 1551M250 1200 245 1240 260 1285 310 1380 330 1400 350 1380 310 1260M260 1285 430 1215M375 1240 390 1300 380 1370 300 1420M390 1300 440 1295M385 1360 420 1380M280 1430 320 1445 420 1380M290 1200 300 1240M320 1180 330 1210M340 1180 360 1200 420 1180M370 1170 380 1190M0 1290 160 1360 330 1551M1490 250 1551 270"/>
          <path class="road" d="M-5 310 90 360 120 430 145 520 135 600 210 760 275 830 380 1100 430 1170 445 1300 420 1390 310 1505 60 1530 30 1560M1340 535 1110 548 1030 600M1030 600 1060 820M40 1290 170 1340 360 1560"/>
          <path class="road wide" d="M1075 970 1000 1340 960 1460 900 1500 865 1560"/>
          <path class="avenue halo" d="M-5 25 410 410 520 530 720 670 790 725 820 780 835 960 860 1090 1000 1350 1140 1560M1050-5 1160 90 1230 150M1160 80 1220 10M-5 1285 170 1230 380 1150M450 1110 1030 930M1200 865 1560 750"/>
          <path class="avenue" d="M-5 25 410 410 520 530 720 670 790 725 820 780 835 960 860 1090 1000 1350 1140 1560M1050-5 1160 90 1230 150M1160 80 1220 10M-5 1285 170 1230 380 1150M450 1110 1030 930M1200 865 1560 750"/>
          <path class="highway" d="M-5 565 230 490 430 420 600 370 940 260 1140 195 1210 150 1240 90V-5"/>
          <path class="highway casing thin" d="M1215 140 1280 205 1450 480 1560 595"/>
          <path class="highway thin" d="M1215 140 1280 205 1450 480 1560 595"/>
        </g>

        <defs>
          <path id="washington" d="M-130 305Q-60 345 0 378 35 398 53 411 90 446 118 446 135 446 158 436"/>
          <path id="columbia" d="M690 973Q790 936 930 901"/>
          <path id="va-shield" d="M7 7H55Q56 40 31 47 6 40 7 7z"/>
        </defs>
        <g class="shield">
          <rect x="54" y="135" width="56" height="54" rx="8"/>
          <path d="M64 141q4 3 9 0l9 3 9-3q5 3 9 0l5 7q-3 5 0 14 4 13-6 17-11 2-17 7-6-5-17-7-10-4-6-17 3-9 0-14z"/>
          <text x="82" y="171" font-size="26">29</text>
        </g>
        <g class="shield" transform="translate(192 383)">
          <rect width="62" height="54" rx="9"/><use href="#va-shield"/>
          <text class="narrow" x="31" y="32" font-size="22">237</text>
        </g>
        <g class="shield" transform="translate(924 847)">
          <rect width="62" height="54" rx="9"/><use href="#va-shield"/>
          <text class="narrow" x="31" y="32" font-size="22">244</text>
        </g>
        <g class="interstate">
          <path class="rim" d="M254 484q9 3 19-1 10 4 19 1 9 9 7 24-3 19-26 27-23-8-26-27-2-15 7-24z"/>
          <path class="blue" d="M249 500h48q3 24-24 32-27-8-24-32z"/>
          <path class="red" d="M255 487q9 3 18-1 9 4 18 1l4 9h-44z"/>
          <text x="273" y="521" font-size="24">66</text>
        </g>

        <g class="district">
          <text x="572" y="350">BALLSTON-</text><text x="572" y="388">VIRGINIA</text><text x="572" y="425">SQUARE</text>
          <text x="809" y="398">CLARENDON</text>
          <text class="from-left" x="1088" y="198">RO</text>
        </g>
        <text class="city" x="569" y="540">Arlington</text>
        <g class="suburb"><text x="52" y="802">ven</text><text x="70" y="843">ners</text></g>
        <g class="street-name">
          <text><textPath href="#washington" startOffset="100%" text-anchor="end">NGTON BLVD</textPath></text>
          <text><textPath href="#columbia">COLUMBIA PIKE</textPath></text>
          <text class="to-end" transform="translate(29 187) rotate(-14)">VD</text>
          <text class="to-end" transform="translate(913 22) rotate(26)">WY</text>
        </g>
      </svg>
      <div class="map-credit">
        <span class="maps-brand">
          <svg viewBox="0 0 29 38" aria-hidden="true"><path d="M20 0q.500 4-2 7-2.500 3-5.500 3-.500-4 2-6.500Q17 .500 20 0zM14.500 11.500Q17 10 20.500 10q4.500.300 7 4-4 2.500-4 7 0 5.500 5 7.500-1 3-3 6-2.500 3.500-5 3.500-1.500 0-3-.700-3-1.300-5.500 0-1.500.700-3 .700-2.500 0-5-3.500Q0 29 0 22q0-6 3-9.500Q5.500 10 8.500 10q3 0 6 1.500z"/></svg>
          <span>Maps</span>
        </span>
        <a class="legal" href="#legal">Legal</a>
      </div>
    </section>

    <section class="stats">
      <dl class="stats-grid">
        <div class="stat"><dt>Points</dt><dd>0</dd></div>
        <div class="stat"><dt>Distance</dt><dd>0 ft</dd></div>
        <div class="stat"><dt>Max</dt><dd>0.00g</dd></div>
      </dl>
    </section>

    <button class="start" type="button">
      <svg viewBox="0 0 38 42" aria-hidden="true"><path d="M0 3Q0-1 4 .500L36 18q4 3 0 6L4 41.500Q0 43 0 39z"/></svg>
      <span>Start Ride</span>
    </button>
  </main>

  <nav class="tabs">
    <a class="tab active" href="#ride" aria-current="page">
      <svg class="bike" viewBox="0 0 112 70" aria-hidden="true">
        <circle cx="21.500" cy="48" r="19"/><circle cx="90" cy="48" r="19"/><circle cx="55.700" cy="48" r="5"/>
        <path d="M30.500 13H45M61 2.700H72.500L90 48M37 14 54 43M43 27 80 21.500M21.500 48H50M21.500 48 43 27M80 22 59 43"/>
        <circle class="fill" cx="21.500" cy="48" r="4.500"/><circle class="fill" cx="90" cy="48" r="4.500"/>
      </svg>
      <span>Ride</span>
    </a>
    <a class="tab" href="#saved">
      <svg class="list" viewBox="0 0 80 63" aria-hidden="true"><rect width="80" height="63" rx="10"/><g class="knock"><path d="M26 15H66.500M26 26H49M26 37H66.500M26 48H49"/><path class="dots" d="M15.500 15h.010M15.500 26h.010M15.500 37h.010M15.500 48h.010"/></g></svg>
      <span>Saved</span>
    </a>
    <a class="tab" href="#bump-map">
      <svg class="cells" viewBox="0 0 69 67" aria-hidden="true"><path d="M6 0h8q6 0 6 6v8q0 6-6 6H6q-6 0-6-6V6q0-6 6-6z" id="cell"/><use href="#cell" x="24.500"/><use href="#cell" x="49"/><use href="#cell" y="23.500"/><use href="#cell" x="24.500" y="23.500"/><use href="#cell" x="49" y="23.500"/><use href="#cell" y="47"/><use href="#cell" x="24.500" y="47"/><use href="#cell" x="49" y="47"/></svg>
      <span>Bump Map</span>
    </a>
    <a class="tab" href="#settings">
      <svg class="gear" viewBox="-37.500 -37.500 75 75" aria-hidden="true">
        <circle r="30"/><circle r="7"/><path class="spoke" d="M9 0H28M-4.500-7.800-14-24.200M-4.500 7.800-14 24.200"/>
        <path class="tooth" id="tooth" d="M31-4.500 35.500-2.200Q39 0 35.500 2.200L31 4.500z"/>
        <use href="#tooth" transform="rotate(20)"/><use href="#tooth" transform="rotate(40)"/><use href="#tooth" transform="rotate(60)"/><use href="#tooth" transform="rotate(80)"/><use href="#tooth" transform="rotate(100)"/><use href="#tooth" transform="rotate(120)"/><use href="#tooth" transform="rotate(140)"/><use href="#tooth" transform="rotate(160)"/><use href="#tooth" transform="rotate(180)"/><use href="#tooth" transform="rotate(200)"/><use href="#tooth" transform="rotate(220)"/><use href="#tooth" transform="rotate(240)"/><use href="#tooth" transform="rotate(260)"/><use href="#tooth" transform="rotate(280)"/><use href="#tooth" transform="rotate(300)"/><use href="#tooth" transform="rotate(320)"/><use href="#tooth" transform="rotate(340)"/>
      </svg>
      <span>Settings</span>
    </a>
  </nav>
</div>
</body>
</html>
```

FILE: styles.css
```css
* { box-sizing: border-box; }

body {
  margin: 0;
  background: #fff;
  color: #000;
  font-family: Inter, "Liberation Sans", sans-serif;
}

h1, h2, p, dl, dd { margin: 0; }
svg { display: block; }

.app {
  min-height: 100vh;
  overflow: hidden;
}

/* Status bar */
.status {
  display: flex;
  justify-content: space-between;
  align-items: center;
  height: 196px;
  padding: 0 101px 0 140px;
}
.status-left, .status-right { display: flex; align-items: center; }
.status-left { gap: 12px; }
.status-right { gap: 18px; }
.clock { font-size: 50px; font-weight: 600; line-height: 60px; }
.locate { width: 38px; height: 40px; }
.signal { width: 58px; height: 38px; }
.signal .off { fill: #ccc; }
.network { font-family: Roboto, sans-serif; font-size: 40px; font-weight: 500; line-height: 48px; }
.battery {
  position: relative;
  width: 73px;
  height: 41px;
  margin-right: 9px;
  border-radius: 13px;
  background: #000;
  color: #fff;
  font-size: 34px;
  font-weight: 700;
  line-height: 41px;
  text-align: center;
}
.battery::after {
  content: "";
  position: absolute;
  top: 14px;
  right: -9px;
  width: 5px;
  height: 13px;
  border-radius: 0 5px 5px 0;
  background: #b4b4b4;
}

.title-bar {
  display: flex;
  justify-content: center;
  height: 152px;
  padding-top: 27px;
}
h1 { font-size: 49px; font-weight: 600; line-height: 60px; }

.content {
  display: flex;
  flex-direction: column;
  gap: 36px;
  padding: 0 48px;
}

/* Bumpiness graph */
.graph {
  position: relative;
  height: 480px;
  padding: 28px 36px;
  border-radius: 36px;
  background: #262626;
}
.graph-label {
  color: #a8a8a8;
  font-size: 33px;
  font-weight: 400;
  line-height: 44px;
}
.graph-value {
  color: #32d958;
  font-size: 62px;
  font-weight: 600;
  line-height: 88px;
}
.graph-line {
  position: absolute;
  top: 50%;
  left: 0;
  width: 100%;
  height: 4px;
  margin-top: -2px;
}
.graph-line line { stroke: #4b4b4b; stroke-width: 3; stroke-dasharray: 9 12; }

/* Map */
.map {
  position: relative;
  aspect-ratio: 1;
  overflow: hidden;
  border-radius: 48px;
  background: #f9f8f2;
}
.map-art { width: 100%; height: 100%; }
.map-art path { stroke-linejoin: round; }
.park { fill: #deead7; }
.golf { fill: #d4ecd3; }
.land { fill: #f9f8f2; }
.plot { fill: #f4f4f4; }
.water { fill: #bbe6f8; }
.haze { fill: #c9a9b8; opacity: .3; }
.shops { fill: #fdefd7; }
.hospital { fill: #fae8e1; }
.faint { opacity: .5; }
.river { fill: none; stroke: #b6e5fa; stroke-width: 11; }
.street { fill: none; stroke: #dfded9; stroke-width: 7; }
.road { fill: none; stroke: #dfded8; stroke-width: 11; }
.wide { stroke-width: 17; }
.avenue { fill: none; stroke: #dfdfda; stroke-width: 22; }
.avenue.halo { stroke: #dfe0ee; stroke-width: 26; }
.highway { fill: none; stroke: #e0dfd8; stroke-width: 28; }
.highway.casing { stroke: #cfccbe; stroke-width: 33; }
.highway.thin { stroke-width: 20; }
.highway.casing.thin { stroke-width: 25; }
.border { fill: none; stroke: #a98bc9; stroke-width: 10; stroke-dasharray: 60 16 10 16; opacity: .55; }

.map-art text {
  paint-order: stroke;
  stroke: #faf9f5;
  stroke-width: 6px;
  stroke-linejoin: round;
  text-anchor: middle;
}
.map-art .district text {
  fill: #a2a19d;
  font-family: Roboto, sans-serif;
  font-size: 32px;
  font-weight: 700;
}
.map-art .district .from-left { text-anchor: start; }
.map-art .city { fill: #9d9994; font-size: 78px; font-weight: 600; }
.map-art .suburb text { fill: #a19d98; font-size: 38px; font-weight: 600; text-anchor: end; }
.map-art .street-name text { fill: #96948f; font-size: 27px; text-anchor: start; }
.map-art .street-name .to-end { text-anchor: end; }
.shield rect { fill: #c5c5c5; }
.shield path, .shield use { fill: #fff; }
.map-art .shield text { fill: #bdbdbd; font-weight: 700; stroke: none; }
.map-art .shield .narrow { font-family: Roboto, sans-serif; }
.rim { fill: #fff; stroke: #d3dbf0; stroke-width: 2; }
.blue { fill: #b5d6ff; }
.red { fill: #fbc6c8; }
.map-art .interstate text { fill: #fff; font-weight: 700; stroke: none; }

.map-credit {
  position: absolute;
  left: 33px;
  bottom: 20px;
  display: flex;
  align-items: center;
  gap: 28px;
}
.maps-brand {
  display: flex;
  align-items: center;
  gap: 5px;
  color: #5b5b58;
  font-size: 44px;
  font-weight: 500;
  line-height: 56px;
}
.maps-brand svg { width: 29px; height: 38px; margin-bottom: 6px; fill: #5b5b58; }
.legal {
  color: #7b7a74;
  font-size: 27px;
  font-weight: 600;
  line-height: 32px;
  text-underline-offset: 4px;
}

/* Ride numbers */
.stats { border-radius: 36px; background: #f1f0f5; overflow: hidden; }
.stats-grid {
  display: grid;
  grid-template-columns: repeat(3, 1fr);
  margin: 0 -48px;
  padding: 20px 0;
}
.stat { position: relative; text-align: center; }
.stat + .stat::before {
  content: "";
  position: absolute;
  top: 20px;
  bottom: 20px;
  left: 0;
  width: 1px;
  background: #c0c0c4;
}
.stat dt { color: #87878b; font-size: 33px; line-height: 46px; }
.stat dd { font-size: 46px; font-weight: 500; line-height: 66px; }

.start {
  display: flex;
  justify-content: center;
  align-items: center;
  gap: 27px;
  height: 151px;
  border: 0;
  border-radius: 76px;
  background: #35c759;
  color: #fff;
  font: 400 49px/60px Inter, "Liberation Sans", sans-serif;
}
.start svg { width: 38px; height: 42px; fill: #fff; }

/* Tab bar */
.tabs {
  position: relative;
  display: grid;
  grid-template-columns: repeat(4, 1fr);
  height: 186px;
  margin: 24px 63px 63px;
  padding: 12px 26px;
  border-radius: 93px;
  background: #fdfdfd;
  box-shadow: 0 18px 90px rgba(0, 0, 0, .1);
}
.tab {
  display: flex;
  flex-direction: column;
  align-items: center;
  justify-content: space-between;
  margin: 0 -14px;
  padding: 22px 0 20px;
  border-radius: 81px;
  color: #1a1a1a;
  font-size: 30px;
  font-weight: 500;
  line-height: 36px;
  text-decoration: none;
}
.tab.active { background: #ebebeb; color: #0080fb; font-weight: 600; }
.tab svg { height: 75px; fill: currentColor; }
.bike { width: 112px; }
.tab .bike { fill: none; stroke: currentColor; stroke-width: 5; stroke-linecap: round; stroke-linejoin: round; }
.tab .bike .fill { fill: currentColor; stroke: none; }
.tab .list { width: 80px; }
.knock { stroke: #fff; stroke-width: 4; stroke-linecap: round; }
.dots { stroke-width: 7; }
.tab .cells { width: 69px; }
.tab .gear { width: 75px; fill: none; stroke: currentColor; stroke-width: 5; }
.gear .spoke { stroke-width: 4; }
.gear .tooth { fill: currentColor; stroke: none; }
```
